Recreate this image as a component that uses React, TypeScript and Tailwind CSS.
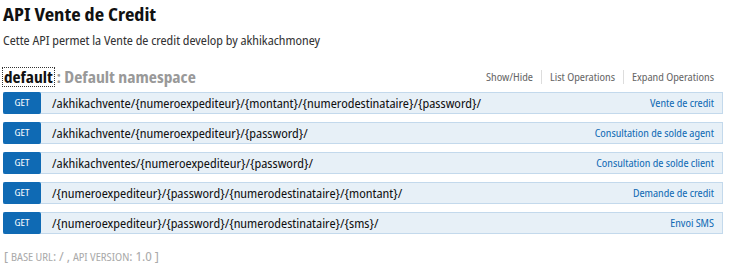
import React from "react";

const ops = [
  { path: "/akhikachvente/{numeroexpediteur}/{montant}/{numerodestinataire}/{password}/", label: "Vente de credit" },
  { path: "/akhikachvente/{numeroexpediteur}/{password}/", label: "Consultation de solde agent" },
  { path: "/akhikachventes/{numeroexpediteur}/{password}/", label: "Consultation de solde client" },
  { path: "/{numeroexpediteur}/{password}/{numerodestinataire}/{montant}/", label: "Demande de credit" },
  { path: "/{numeroexpediteur}/{password}/{numerodestinataire}/{sms}/", label: "Envoi SMS" },
];

export default function App() {
  return (
    <div className="w-[735px] h-[267px] bg-white overflow-hidden pl-[3px] pr-[12px] pt-[1px] font-stretch-condensed font-['Noto_Sans_Display','Noto_Sans',sans-serif]">
      <h1 className="text-[18px] font-bold text-[#111] leading-[26px]">API Vente de Credit</h1>
      <p className="text-[12.5px] text-[#333] mt-[6px] leading-[16px]">Cette API permet la Vente de credit develop by akhikachmoney</p>
      <div className="flex items-end justify-between mt-[17px] h-[20px]">
        <div className="flex items-baseline">
          <span className="text-[15.3px] font-bold text-[#111] leading-[18px] outline-1 outline-dotted outline-[#333] px-[1px]">default</span>
          <span className="text-[15.5px] font-bold text-[#999] leading-[18px] ml-[3px]">: Default namespace</span>
        </div>
        <div className="flex items-center text-[10.6px] text-[#666] leading-[14px] mb-[2px] mr-[9px]">
          <span>Show/Hide</span>
          <span className="w-px h-[14px] bg-[#ddd] mx-[8px]" />
          <span>List Operations</span>
          <span className="w-px h-[14px] bg-[#ddd] mx-[8px]" />
          <span>Expand Operations</span>
        </div>
      </div>
      <div className="flex flex-col gap-[8px] mt-[6px]">
        {ops.map((o) => (
          <div key={o.path} className="flex items-center h-[22px] bg-[#e7f0f7] border border-[#c3d9ec] border-l-0">
            <div className="w-[38px] h-[22px] -my-px bg-[#0f6ab4] flex items-center justify-center text-white text-[9.5px] rounded-[2px]">GET</div>
            <div className="flex-1 pl-[11px] text-[12.65px] text-[#111] leading-[16px]">{o.path}</div>
            <div className="pr-[8px] text-[10.5px] text-[#0f6ab4] leading-[14px]">{o.label}</div>
          </div>
        ))}
      </div>
      <div className="mt-[14px] text-[#aaa] text-[13.3px] leading-[16px] ml-[1px]">
        [ <span className="text-[10.8px]">BASE URL</span>: / , <span className="text-[10.8px]">API VERSION</span>: 1.0 ]
      </div>
    </div>
  );
}
